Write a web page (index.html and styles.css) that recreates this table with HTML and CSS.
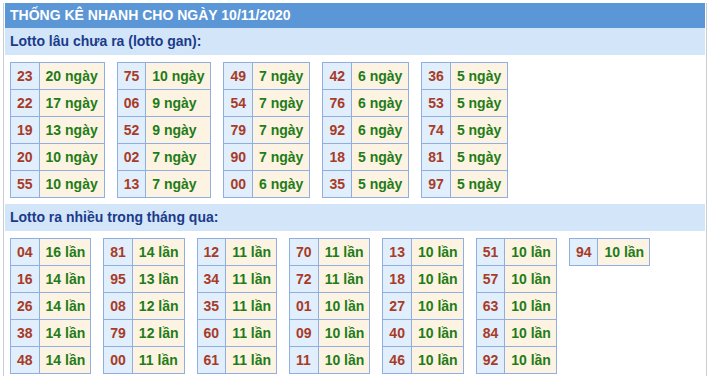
FILE: index.html
```html
<!DOCTYPE html>
<html lang="vi">
<head>
<meta charset="utf-8">
<title>Thống kê nhanh</title>
<link rel="stylesheet" href="styles.css">
</head>
<body>
<div class="wrap">
  <div class="title">THỐNG KÊ NHANH CHO NGÀY 10/11/2020</div>
  <div class="sub">Lotto lâu chưa ra (lotto gan):</div>
  <div class="grid">
    <table class="tk"><tr><td class="n">23</td><td class="v">20 ngày</td></tr><tr><td class="n">22</td><td class="v">17 ngày</td></tr><tr><td class="n">19</td><td class="v">13 ngày</td></tr><tr><td class="n">20</td><td class="v">10 ngày</td></tr><tr><td class="n">55</td><td class="v">10 ngày</td></tr></table>
    <table class="tk"><tr><td class="n">75</td><td class="v">10 ngày</td></tr><tr><td class="n">06</td><td class="v">9 ngày</td></tr><tr><td class="n">52</td><td class="v">9 ngày</td></tr><tr><td class="n">02</td><td class="v">7 ngày</td></tr><tr><td class="n">13</td><td class="v">7 ngày</td></tr></table>
    <table class="tk"><tr><td class="n">49</td><td class="v">7 ngày</td></tr><tr><td class="n">54</td><td class="v">7 ngày</td></tr><tr><td class="n">79</td><td class="v">7 ngày</td></tr><tr><td class="n">90</td><td class="v">7 ngày</td></tr><tr><td class="n">00</td><td class="v">6 ngày</td></tr></table>
    <table class="tk"><tr><td class="n">42</td><td class="v">6 ngày</td></tr><tr><td class="n">76</td><td class="v">6 ngày</td></tr><tr><td class="n">92</td><td class="v">6 ngày</td></tr><tr><td class="n">18</td><td class="v">5 ngày</td></tr><tr><td class="n">35</td><td class="v">5 ngày</td></tr></table>
    <table class="tk"><tr><td class="n">36</td><td class="v">5 ngày</td></tr><tr><td class="n">53</td><td class="v">5 ngày</td></tr><tr><td class="n">74</td><td class="v">5 ngày</td></tr><tr><td class="n">81</td><td class="v">5 ngày</td></tr><tr><td class="n">97</td><td class="v">5 ngày</td></tr></table>
  </div>
  <div class="sub">Lotto ra nhiều trong tháng qua:</div>
  <div class="grid grid-lan">
    <table class="tk"><tr><td class="n">04</td><td class="v">16 lần</td></tr><tr><td class="n">16</td><td class="v">14 lần</td></tr><tr><td class="n">26</td><td class="v">14 lần</td></tr><tr><td class="n">38</td><td class="v">14 lần</td></tr><tr><td class="n">48</td><td class="v">14 lần</td></tr></table>
    <table class="tk"><tr><td class="n">81</td><td class="v">14 lần</td></tr><tr><td class="n">95</td><td class="v">13 lần</td></tr><tr><td class="n">08</td><td class="v">12 lần</td></tr><tr><td class="n">79</td><td class="v">12 lần</td></tr><tr><td class="n">00</td><td class="v">11 lần</td></tr></table>
    <table class="tk"><tr><td class="n">12</td><td class="v">11 lần</td></tr><tr><td class="n">34</td><td class="v">11 lần</td></tr><tr><td class="n">35</td><td class="v">11 lần</td></tr><tr><td class="n">60</td><td class="v">11 lần</td></tr><tr><td class="n">61</td><td class="v">11 lần</td></tr></table>
    <table class="tk"><tr><td class="n">70</td><td class="v">11 lần</td></tr><tr><td class="n">72</td><td class="v">11 lần</td></tr><tr><td class="n">01</td><td class="v">10 lần</td></tr><tr><td class="n">09</td><td class="v">10 lần</td></tr><tr><td class="n">11</td><td class="v">10 lần</td></tr></table>
    <table class="tk"><tr><td class="n">13</td><td class="v">10 lần</td></tr><tr><td class="n">18</td><td class="v">10 lần</td></tr><tr><td class="n">27</td><td class="v">10 lần</td></tr><tr><td class="n">40</td><td class="v">10 lần</td></tr><tr><td class="n">46</td><td class="v">10 lần</td></tr></table>
    <table class="tk"><tr><td class="n">51</td><td class="v">10 lần</td></tr><tr><td class="n">57</td><td class="v">10 lần</td></tr><tr><td class="n">63</td><td class="v">10 lần</td></tr><tr><td class="n">84</td><td class="v">10 lần</td></tr><tr><td class="n">92</td><td class="v">10 lần</td></tr></table>
    <table class="tk"><tr><td class="n">94</td><td class="v">10 lần</td></tr></table>
  </div>
</div>
</body>
</html>
```

FILE: styles.css
```css
html, body {
  margin: 0;
  padding: 0;
  background: #ffffff;
}
body {
  font-family: "Liberation Sans", Arial, sans-serif;
}
.wrap {
  margin: 3px 0 0 3px;
  width: 700px;
  padding: 0 1px;
  border-left: 1px solid #c9cdd3;
  border-right: 1px solid #c9cdd3;
  min-height: 373px;
}
.title {
  background: #5b96d6;
  color: #ffffff;
  font-weight: bold;
  font-size: 14px;
  height: 25px;
  line-height: 25px;
  padding-left: 5px;
}
.sub {
  background: #d3e6f9;
  color: #1b3b8a;
  font-weight: bold;
  font-size: 14px;
  height: 27px;
  line-height: 27px;
  padding-left: 5px;
}
.grid {
  display: flex;
  flex-wrap: wrap;
  align-items: flex-start;
  gap: 12px;
  padding: 7px 0 6px 5px;
}
.tk {
  border-collapse: collapse;
  font-weight: bold;
  font-size: 14px;
}
.tk td {
  border: 1px solid #90aee0;
  padding: 5px 6px;
  line-height: 16px;
  white-space: nowrap;
}
.tk .v {
  background: #fdf3e2;
  color: #1f7c17;
}
.tk .n {
  background: #e1eefc;
  color: #a83b27;
}
.grid-lan .tk .v {
  padding-right: 5px;
}
```
